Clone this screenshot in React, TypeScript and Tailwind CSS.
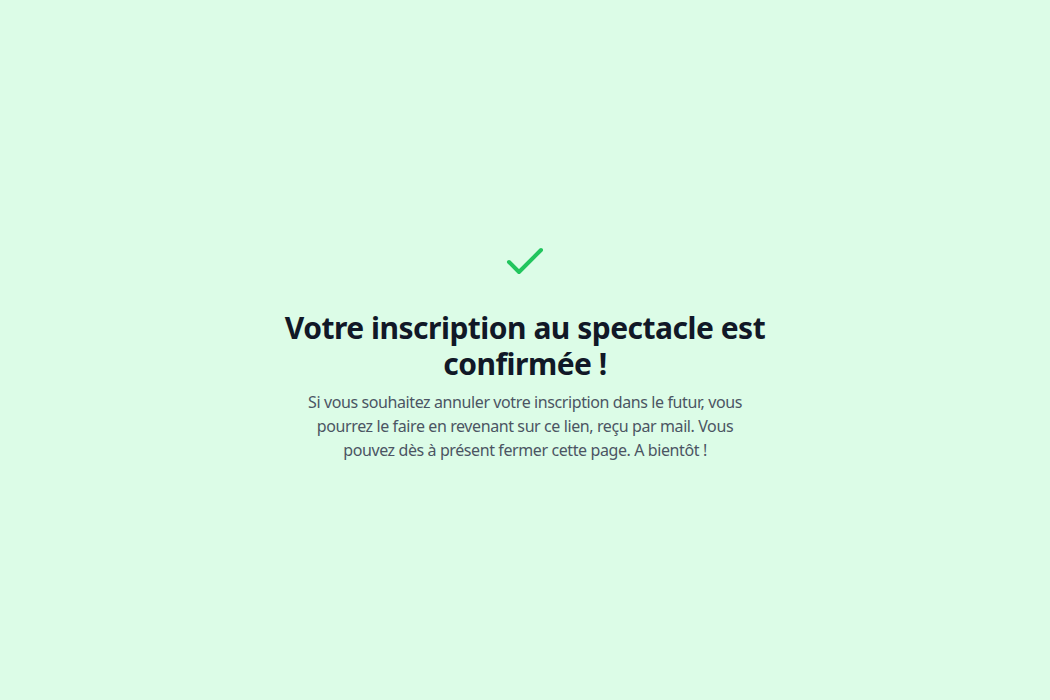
import { Check } from "lucide-react";

export default function App() {
  return (
    <div
      className="min-h-screen w-full bg-[#dcfce7] flex items-center justify-center"
      style={{ fontFamily: '"Noto Sans", "Open Sans", sans-serif' }}
    >
      <div className="flex flex-col items-center text-center">
        <Check className="w-12 h-12 text-[#22c55e] mb-6" strokeWidth={2} />
        <h1 className="text-[30px] leading-9 font-bold text-[#111827] tracking-[-0.5px]">
          Votre inscription au spectacle est
          <br />
          confirmée !
        </h1>
        <p className="mt-2 text-base leading-6 text-[#4b5563] tracking-[-0.4px]">
          Si vous souhaitez annuler votre inscription dans le futur, vous
          <br />
          pourrez le faire en revenant sur ce lien, reçu par mail. Vous
          <br />
          pouvez dès à présent fermer cette page. A bientôt !
        </p>
      </div>
    </div>
  );
}
